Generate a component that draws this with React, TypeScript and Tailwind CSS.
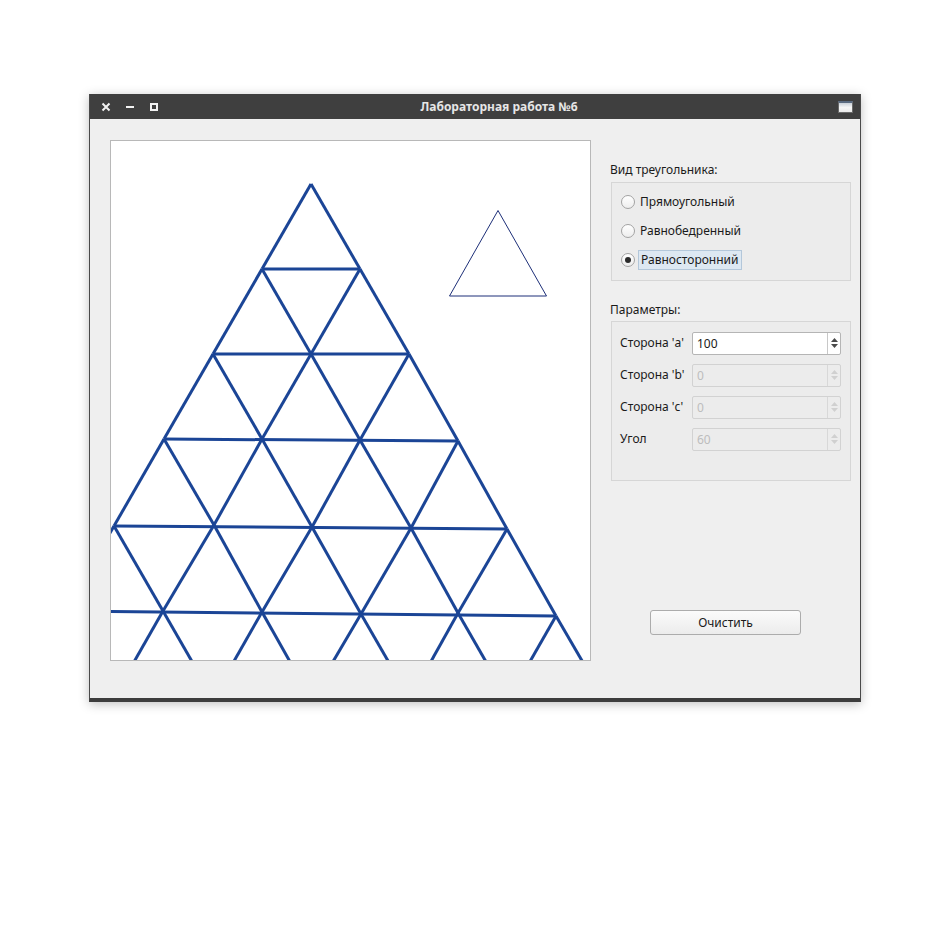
import React from "react";

type Pt = [number, number];

// vertex rows of the drawn triangle grid, in page coordinates
const rows: Pt[][] = [
  [[311, 184]],
  [[262, 269], [360, 269]],
  [[213, 354], [311, 354], [409, 354]],
  [[164, 439], [262, 439], [360, 440], [458, 441]],
  [[114, 526], [214, 525], [312, 527], [411, 528], [507, 529]],
  [[65, 611], [163, 611], [262, 612], [361, 614], [458, 613], [556, 616]],
  [[16, 697], [114, 697], [213, 698], [311, 699], [410, 699], [508, 700], [606, 702]],
];

const gridLines = () => {
  const out: [Pt, Pt][] = [];
  rows.forEach((row, i) => {
    if (row.length > 1) out.push([row[0], row[row.length - 1]]);
    const next = rows[i + 1];
    if (!next) return;
    row.forEach((p, j) => {
      out.push([p, next[j]]);
      out.push([p, next[j + 1]]);
    });
  });
  return out;
};

const Radio = ({ label, checked }: { label: string; checked?: boolean }) => (
  <div className="flex items-center h-[20px]">
    <span className="w-[14px] h-[14px] rounded-full border border-[#a3a3a3] bg-gradient-to-b from-white to-[#ededed] flex items-center justify-center">
      {checked && <span className="w-[6px] h-[6px] rounded-full bg-[#2b2b2b]" />}
    </span>
    <span
      className={
        checked
          ? "ml-[3px] pl-[2px] pr-[3px] h-[20px] leading-[18px] border border-[#b3c7da] bg-[#dde8f2] text-[#1a1a1a]"
          : "ml-[5px] text-[#1a1a1a]"
      }
    >
      {label}
    </span>
  </div>
);

const Spin = ({ label, value, disabled }: { label: string; value: string; disabled?: boolean }) => (
  <div className="flex items-center h-[22px]">
    <span className="w-[72px] text-[#1a1a1a]">{label}</span>
    <div
      className={
        "flex w-[149px] h-[23px] rounded-[2px] border " +
        (disabled ? "border-[#d2d2d2] bg-[#ececec]" : "border-[#b5b5b5] bg-white")
      }
    >
      <span className={"flex-1 pl-[4px] leading-[21px] " + (disabled ? "text-[#bdbdbd]" : "text-[#1a1a1a]")}>
        {value}
      </span>
      <div className={"w-[13px] border-l flex flex-col items-center justify-center gap-[2px] " + (disabled ? "border-[#d8d8d8]" : "border-[#c8c8c8]")}>
        <svg width="7" height="4" viewBox="0 0 7 4">
          <path d="M0 4 L3.5 0 L7 4Z" fill={disabled ? "#d0d0d0" : "#4a4a4a"} />
        </svg>
        <svg width="7" height="4" viewBox="0 0 7 4">
          <path d="M0 0 L3.5 4 L7 0Z" fill={disabled ? "#d0d0d0" : "#4a4a4a"} />
        </svg>
      </div>
    </div>
  </div>
);

export default function App() {
  return (
    <div className="w-[938px] h-[933px] bg-white pt-[94px] pl-[89px] text-[12px]" style={{ fontFamily: "'Noto Sans', sans-serif" }}>
      <div className="w-[772px] h-[608px] flex flex-col bg-[#efefef] border-x border-[#4a4a4a] border-b-[4px] border-b-[#3d3d3d] shadow-[0_2px_10px_rgba(0,0,0,0.25)]">
        {/* title bar */}
        <div className="h-[25px] bg-[#3f3f3f] flex items-center relative shrink-0">
          <div className="flex items-center pl-[11px] gap-[14px] text-[#f2f2f2]">
            <svg width="10" height="10" viewBox="0 0 10 10">
              <path d="M1.5 1.5 L8.5 8.5 M8.5 1.5 L1.5 8.5" stroke="#f2f2f2" strokeWidth="2" />
            </svg>
            <svg width="10" height="10" viewBox="0 0 10 10">
              <path d="M1 5 L9 5" stroke="#f2f2f2" strokeWidth="2" />
            </svg>
            <svg width="10" height="10" viewBox="0 0 10 10">
              <rect x="2" y="2" width="6" height="6" fill="none" stroke="#f2f2f2" strokeWidth="2" />
            </svg>
          </div>
          <div className="absolute inset-0 pl-[48px] flex items-center justify-center text-[12px] font-bold text-[#e6e6e6]">
            Лабораторная работа №6
          </div>
          <div className="ml-auto mr-[7px] w-[15px] h-[12px] border border-[#6a6a6a] bg-gradient-to-b from-[#c9d0d8] via-[#f6f6f6] to-[#eaeaea] border-t-[2px] border-t-[#5a6a80]" />
        </div>

        {/* body */}
        <div className="flex pl-[20px] pt-[21px]">
          <div className="w-[481px] h-[521px] border border-[#b8b8b8] bg-white overflow-hidden shrink-0">
            <svg width="479" height="519" viewBox="111 141 479 519">
              {gridLines().map(([a, b], i) => (
                <line key={i} x1={a[0]} y1={a[1]} x2={b[0]} y2={b[1]} stroke="#1b4596" strokeWidth="3" />
              ))}
              <path d="M498 210.5 L449.5 296 L546.5 296 Z" fill="none" stroke="#1d2f78" strokeWidth="1" />
            </svg>
          </div>

          <div className="ml-[19px] w-[241px] pt-[21px] flex flex-col">
            <div className="text-[#1a1a1a] leading-[17px]">Вид треугольника:</div>
            <div className="mt-[4px] ml-[1px] h-[99px] border border-[#d6d6d6] bg-[#ececec] pl-[9px] pt-[9px] flex flex-col gap-[9px]">
              <Radio label="Прямоугольный" />
              <Radio label="Равнобедренный" />
              <Radio label="Равносторонний" checked />
            </div>

            <div className="mt-[20px] text-[#1a1a1a] leading-[17px]">Параметры:</div>
            <div className="mt-[3px] ml-[1px] h-[160px] border border-[#d6d6d6] bg-[#ececec] pl-[8px] pt-[10px] flex flex-col gap-[10px]">
              <Spin label="Сторона 'a'" value="100" />
              <Spin label="Сторона 'b'" value="0" disabled />
              <Spin label="Сторона 'c'" value="0" disabled />
              <Spin label="Угол" value="60" disabled />
            </div>

            <div className="mt-[129px] ml-[40px] w-[151px] h-[25px] rounded-[3px] border border-[#acacac] bg-gradient-to-b from-[#fbfbfb] to-[#ececec] flex items-center justify-center text-[#1a1a1a]">
              Очистить
            </div>
          </div>
        </div>
      </div>
    </div>
  );
}
